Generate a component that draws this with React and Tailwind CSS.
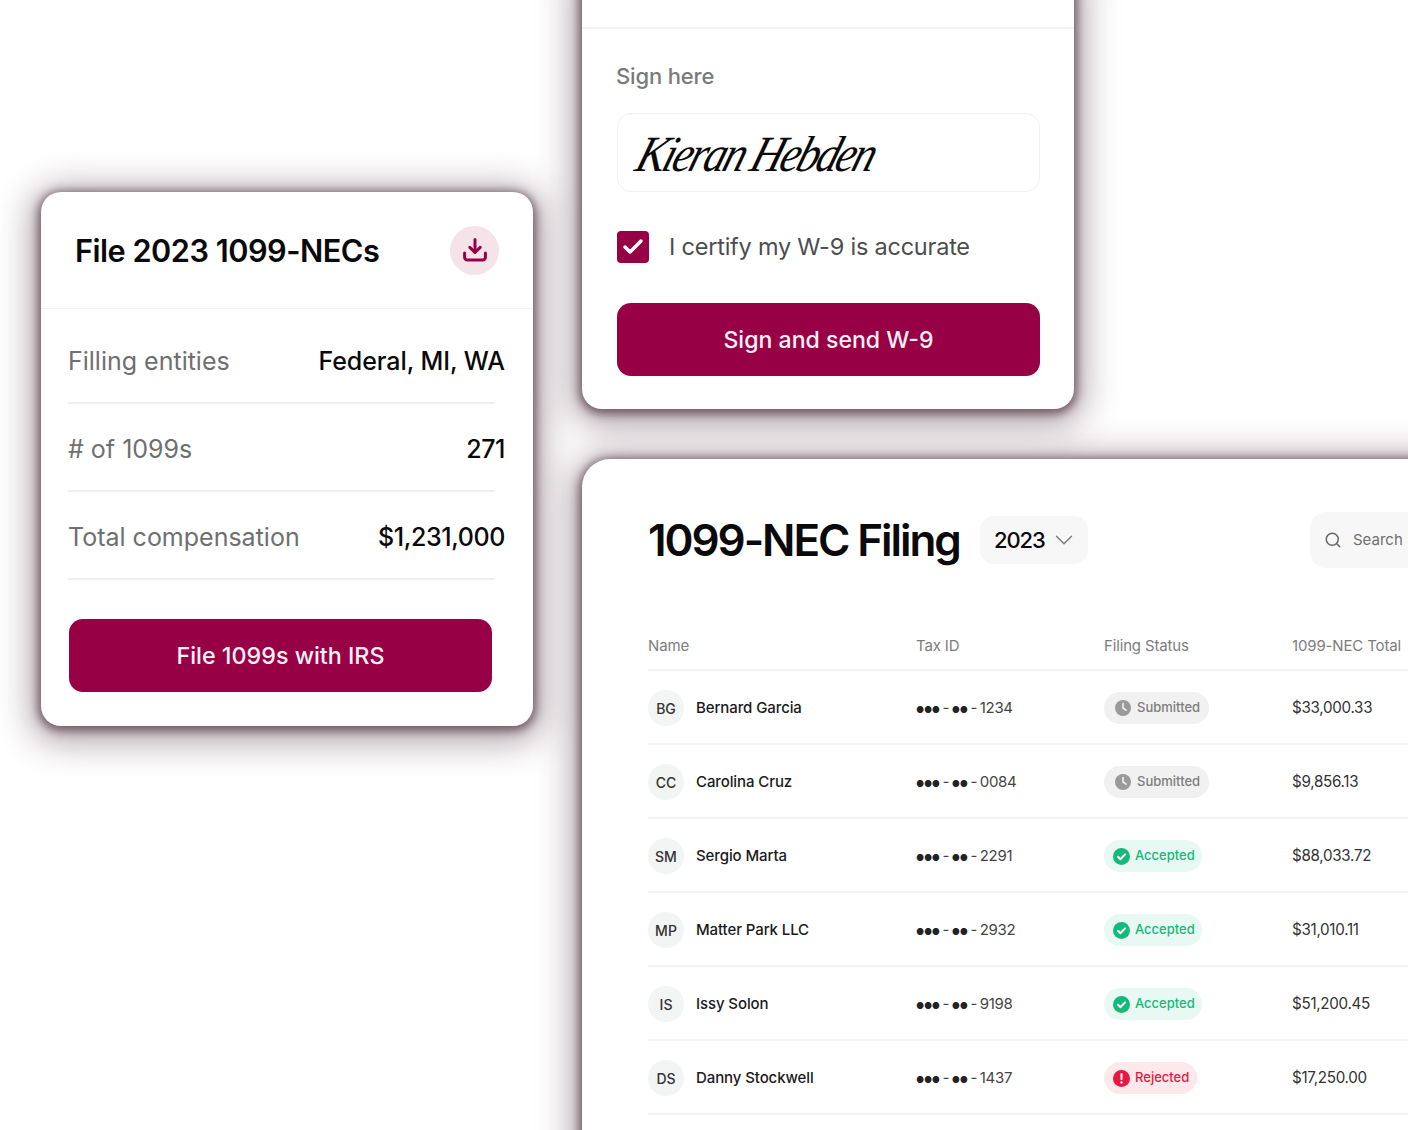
import React from 'react'
import { ChevronDown, Search, Check } from 'lucide-react'

const rows = [
  { initials: 'BG', name: 'Bernard Garcia', tail: '1234', status: 'Submitted', total: '$33,000.33' },
  { initials: 'CC', name: 'Carolina Cruz', tail: '0084', status: 'Submitted', total: '$9,856.13' },
  { initials: 'SM', name: 'Sergio Marta', tail: '2291', status: 'Accepted', total: '$88,033.72' },
  { initials: 'MP', name: 'Matter Park LLC', tail: '2932', status: 'Accepted', total: '$31,010.11' },
  { initials: 'IS', name: 'Issy Solon', tail: '9198', status: 'Accepted', total: '$51,200.45' },
  { initials: 'DS', name: 'Danny Stockwell', tail: '1437', status: 'Rejected', total: '$17,250.00' },
]

const summary = [
  { label: 'Filling entities', value: 'Federal, MI, WA', valueClass: 'tracking-[-0.07px]' },
  { label: '# of 1099s', value: '271', valueClass: 'tracking-[-0.4px]' },
  { label: 'Total compensation', value: '$1,231,000', valueClass: 'tracking-[-0.4px]' },
]

function DownloadIcon() {
  return (
    <svg width="26" height="26" viewBox="0 0 26 26" fill="none" stroke="#980046" strokeWidth="3" strokeLinecap="round" strokeLinejoin="round">
      <path d="M13 2.5v12.5" />
      <path d="M7.8 10.4 13 15.4l5.2-5" />
      <path d="M2.6 16v4.2a2.8 2.8 0 0 0 2.8 2.8h15.2a2.8 2.8 0 0 0 2.8-2.8V16" />
    </svg>
  )
}

function StatusIcon({ status }) {
  if (status === 'Submitted') {
    return (
      <svg width="16" height="16" viewBox="0 0 16 16">
        <circle cx="8" cy="8" r="8" fill="#9a9a9a" />
        <path d="M8 3.6V8l3 2.2" fill="none" stroke="#f1f1f1" strokeWidth="1.6" strokeLinecap="round" strokeLinejoin="round" />
      </svg>
    )
  }
  if (status === 'Accepted') {
    return (
      <svg width="17" height="17" viewBox="0 0 17 17">
        <circle cx="8.5" cy="8.5" r="8.5" fill="#15b97c" />
        <path d="m5 8.8 2.4 2.4L12 6.4" fill="none" stroke="#fff" strokeWidth="2" strokeLinecap="round" strokeLinejoin="round" />
      </svg>
    )
  }
  return (
    <svg width="17" height="17" viewBox="0 0 17 17">
      <circle cx="8.5" cy="8.5" r="8.5" fill="#e8173f" />
      <path d="M8.5 4v5.2" fill="none" stroke="#fff" strokeWidth="2" strokeLinecap="round" />
      <circle cx="8.5" cy="12.4" r="1.2" fill="#fff" />
    </svg>
  )
}

function StatusPill({ status }) {
  if (status === 'Submitted') {
    return (
      <span className="inline-flex h-8 w-[105px] items-center gap-[6px] rounded-full bg-[#f1f1f1] pl-[11px] text-[13px] font-medium text-[#7d7d7d]">
        <StatusIcon status={status} />
        {status}
      </span>
    )
  }
  if (status === 'Accepted') {
    return (
      <span className="inline-flex h-8 w-[98px] items-center gap-[5px] rounded-full bg-[#e8f8f2] pl-[9px] text-[13px] font-medium text-[#15b97c]">
        <StatusIcon status={status} />
        {status}
      </span>
    )
  }
  return (
    <span className="inline-flex h-8 w-[93px] items-center gap-[5px] rounded-full bg-[#fde8ec] pl-[9px] text-[13px] font-medium text-[#e8173f]">
      <StatusIcon status={status} />
      {status}
    </span>
  )
}

function SummaryCard() {
  return (
    <div className="mt-[192px] h-[534px] w-[492px] shrink-0 rounded-[20px] bg-white shadow-[0_2px_10px_3px_rgba(60,30,45,0.6),0_6px_34px_10px_rgba(70,40,55,0.42)]">
      <div className="flex h-[117px] items-center justify-between border-b border-[#f3f3f3] px-[34px]">
        <h2 className="pt-[3px] text-[30.7px] font-semibold tracking-[-0.5px] text-[#0a0a0a]">File 2023 1099-NECs</h2>
        <div className="flex h-[49px] w-[49px] items-center justify-center rounded-full bg-[#f5e3ea]">
          <DownloadIcon />
        </div>
      </div>
      <div className="pl-[27px] pt-[7px]">
        {summary.map((item) => (
          <div key={item.label} className="h-[88px] w-[427px] border-b-2 border-[#f0f0f0]">
            <div className="flex h-[87px] w-[437px] items-center justify-between pt-[4px] text-[25px]">
              <span className="tracking-[0px] text-[#6f6f6f]">{item.label}</span>
              <span className={`font-medium text-[#0a0a0a] ${item.valueClass}`}>{item.value}</span>
            </div>
          </div>
        ))}
        <button className="ml-px mt-[39px] h-[73px] w-[423px] rounded-[14px] bg-[#980046] pt-[2px] text-[23.3px] font-medium text-[#fdf0f5]">
          File 1099s with IRS
        </button>
      </div>
    </div>
  )
}

function SignCard() {
  return (
    <div className="mt-[-40px] h-[449px] w-[492px] shrink-0 rounded-[20px] bg-white pt-[67px] shadow-[0_2px_10px_3px_rgba(60,30,45,0.6),0_6px_34px_10px_rgba(70,40,55,0.42)]">
      <div className="border-b-2 border-[#f3f3f3]" />
      <div className="pl-[35px] pt-[32px]">
        <div className="-ml-px text-[22px] font-medium leading-[30px] tracking-[-0.15px] text-[#7a7a7a]">Sign here</div>
        <div className="mt-[22px] flex h-[79px] w-[423px] items-center rounded-[14px] border border-[#f1f1f1] pl-[21px]">
          <span className="-skew-x-[20deg] scale-y-[1.15] pt-[4px] font-['Liberation_Serif',serif] text-[44px] italic leading-none tracking-[-2.65px] text-[#0a0a0a]">
            Kieran Hebden
          </span>
        </div>
        <div className="mt-[39px] flex items-center gap-5">
          <div className="flex h-8 w-8 items-center justify-center rounded-[4px] bg-[#980046]">
            <Check size={24} strokeWidth={3.5} color="#fff" />
          </div>
          <span className="text-[23.5px] leading-8 tracking-[-0.22px] text-[#4d4d4d]">I certify my W-9 is accurate</span>
        </div>
        <button className="mt-[40px] h-[73px] w-[423px] rounded-[14px] bg-[#980046] pt-[1px] text-[23.1px] font-medium text-[#fdf0f5]">
          Sign and send W-9
        </button>
      </div>
    </div>
  )
}

function FilingCard() {
  return (
    <div className="mt-[50px] h-[760px] w-[900px] shrink-0 rounded-tl-[28px] bg-white pl-[66px] pt-[52px] shadow-[0_2px_10px_3px_rgba(60,30,45,0.6),0_6px_34px_10px_rgba(70,40,55,0.42)]">
      <div className="flex h-[58px] items-center">
        <h1 className="w-[332px] text-[44px] font-semibold tracking-[-2.07px] text-[#0a0a0a]">1099-NEC Filing</h1>
        <div className="flex h-12 w-[108px] items-center gap-[4px] rounded-[14px] bg-[#f7f7f7] pl-[14px]">
          <span className="text-[22px] font-medium tracking-[-1.1px] text-[#0a0a0a]">2023</span>
          <ChevronDown size={30} strokeWidth={1.1} color="#777" />
        </div>
        <div className="ml-[222px] flex h-14 w-[160px] items-center gap-[11px] rounded-[16px] bg-[#f7f7f7] pl-[14px]">
          <Search size={18} strokeWidth={2} color="#666" />
          <span className="text-[15px] text-[#6f6f6f]">Search</span>
        </div>
      </div>
      <div className="mt-[59px] grid h-[43px] grid-cols-[268px_188px_188px_1fr] items-start border-b-2 border-[#f3f3f3] pt-[8px] text-[15px] leading-5 tracking-[-0.15px] text-[#7d7d7d]">
        <span>Name</span>
        <span>Tax ID</span>
        <span>Filing Status</span>
        <span>1099-NEC Total</span>
      </div>
      {rows.map((row) => (
        <div key={row.initials} className="grid h-[74px] grid-cols-[268px_188px_188px_1fr] items-center border-b-2 border-[#f3f3f3] pt-[2px]">
          <div className="flex items-center gap-3">
            <div className="flex h-9 w-9 items-center justify-center rounded-full bg-[#f3f4f4] text-[14px] font-medium text-[#333]">
              {row.initials}
            </div>
            <span className="text-[15px] font-medium tracking-[-0.1px] text-[#1a1a1a]">{row.name}</span>
          </div>
          <span className="text-[15px] tracking-[-0.3px] text-[#444] [word-spacing:-1.2px]">
            <span className="text-[9px] tracking-[-0.3px] text-[#222]">●●●</span> - <span className="text-[9px] tracking-[-0.3px] text-[#222]">●●</span> - {row.tail}
          </span>
          <div>
            <StatusPill status={row.status} />
          </div>
          <span className="text-[15.2px] tracking-[-0.3px] text-[#333]">{row.total}</span>
        </div>
      ))}
    </div>
  )
}

export default function App() {
  return (
    <div className="flex h-[1130px] w-[1408px] overflow-hidden bg-white pl-[41px] font-['Inter',sans-serif]">
      <SummaryCard />
      <div className="ml-[49px] flex w-[900px] shrink-0 flex-col">
        <SignCard />
        <FilingCard />
      </div>
    </div>
  )
}
